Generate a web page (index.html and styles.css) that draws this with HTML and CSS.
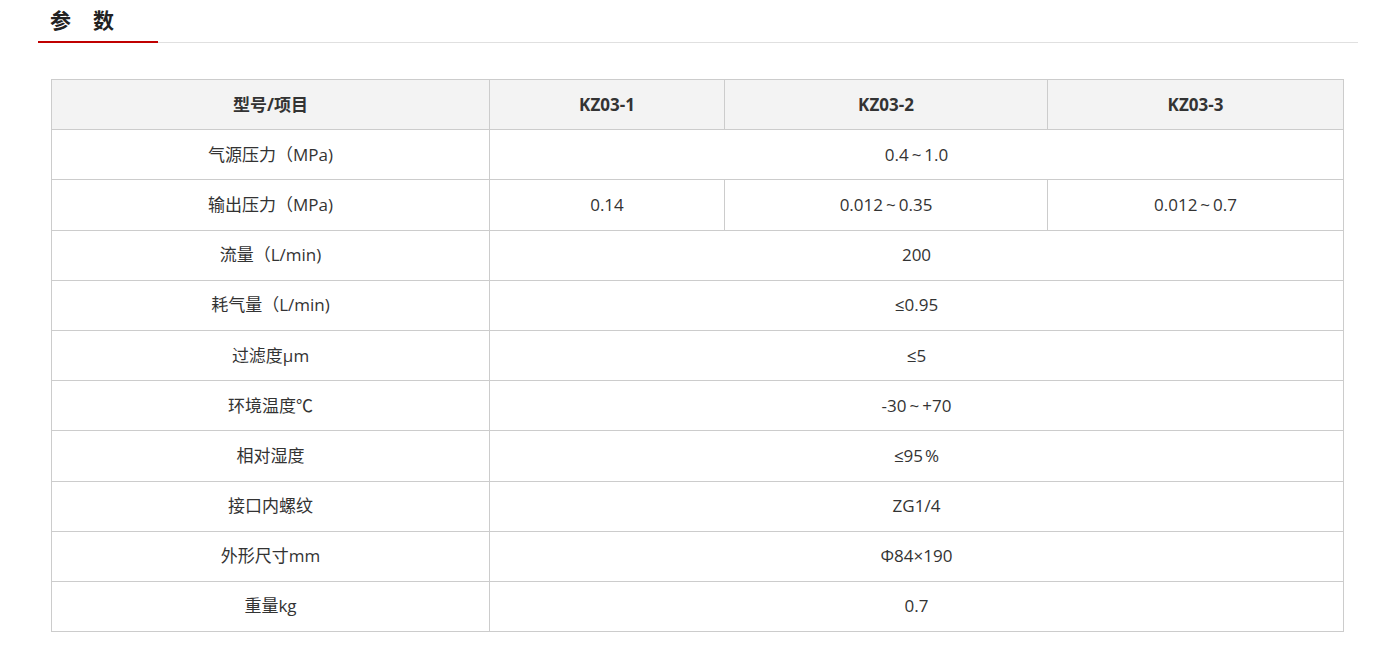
FILE: index.html
```html
<!DOCTYPE html>
<html lang="zh-CN">
<head>
<meta charset="utf-8">
<title>参数</title>
<link rel="stylesheet" href="styles.css">
</head>
<body>
<div class="section">
  <div class="head">
    <h2 class="title">参数</h2>
  </div>
  <table class="params">
    <colgroup>
      <col class="c1"><col class="c2"><col class="c3"><col class="c4">
    </colgroup>
    <thead>
      <tr><th>型号/项目</th><th>KZ03-1</th><th>KZ03-2</th><th>KZ03-3</th></tr>
    </thead>
    <tbody>
      <tr><td>气源压力（MPa)</td><td colspan="3">0.4<span class="tilde">~</span>1.0</td></tr>
      <tr><td>输出压力（MPa)</td><td>0.14</td><td>0.012<span class="tilde">~</span>0.35</td><td>0.012<span class="tilde">~</span>0.7</td></tr>
      <tr><td>流量（L/min)</td><td colspan="3">200</td></tr>
      <tr><td>耗气量（L/min)</td><td colspan="3">≤0.95</td></tr>
      <tr><td>过滤度μm</td><td colspan="3">≤5</td></tr>
      <tr><td>环境温度℃</td><td colspan="3">-30<span class="tilde">~</span>+70</td></tr>
      <tr><td>相对湿度</td><td colspan="3">≤95<span class="pct">%</span></td></tr>
      <tr><td>接口内螺纹</td><td colspan="3">ZG1/4</td></tr>
      <tr><td>外形尺寸mm</td><td colspan="3">Φ84×190</td></tr>
      <tr><td>重量kg</td><td colspan="3">0.7</td></tr>
    </tbody>
  </table>
</div>
</body>
</html>
```

FILE: styles.css
```css
html, body {
  margin: 0;
  padding: 0;
  background: #fff;
}
body {
  font-family: "Open Sans", "Noto Sans CJK SC", sans-serif;
  color: #333;
  font-size: 17px;
}
.section {
  margin-left: 38px;
  width: 1320px;
}
.head {
  height: 42px;
  border-bottom: 1px solid #e0e0e0;
  display: flex;
  align-items: flex-end;
}
.title {
  margin: 0 0 -1px 0;
  width: 120px;
  box-sizing: border-box;
  height: 43px;
  padding: 4px 0 0 12px;
  border-bottom: 2px solid #c00000;
  font-family: "Noto Sans CJK SC", sans-serif;
  font-size: 21px;
  font-weight: bold;
  line-height: 30px;
  letter-spacing: 22px;
  color: #222;
}
.params {
  margin: 36px 0 0 13px;
  width: 1292px;
  border-collapse: collapse;
  table-layout: fixed;
  border: 1px solid #ccc;
}
.c1 { width: 438px; }
.c2 { width: 235px; }
.c3 { width: 323px; }
.c4 { width: 296px; }
.params th,
.params td {
  border: 1px solid #ccc;
  height: 49.2px;
  padding: 0;
  text-align: center;
  vertical-align: middle;
  font-size: 17px;
  line-height: 20px;
}
.params th {
  background: #f3f3f3;
  font-weight: bold;
  color: #333;
}
.tilde {
  padding: 0 3px;
}
.pct {
  padding-left: 2px;
}
```
